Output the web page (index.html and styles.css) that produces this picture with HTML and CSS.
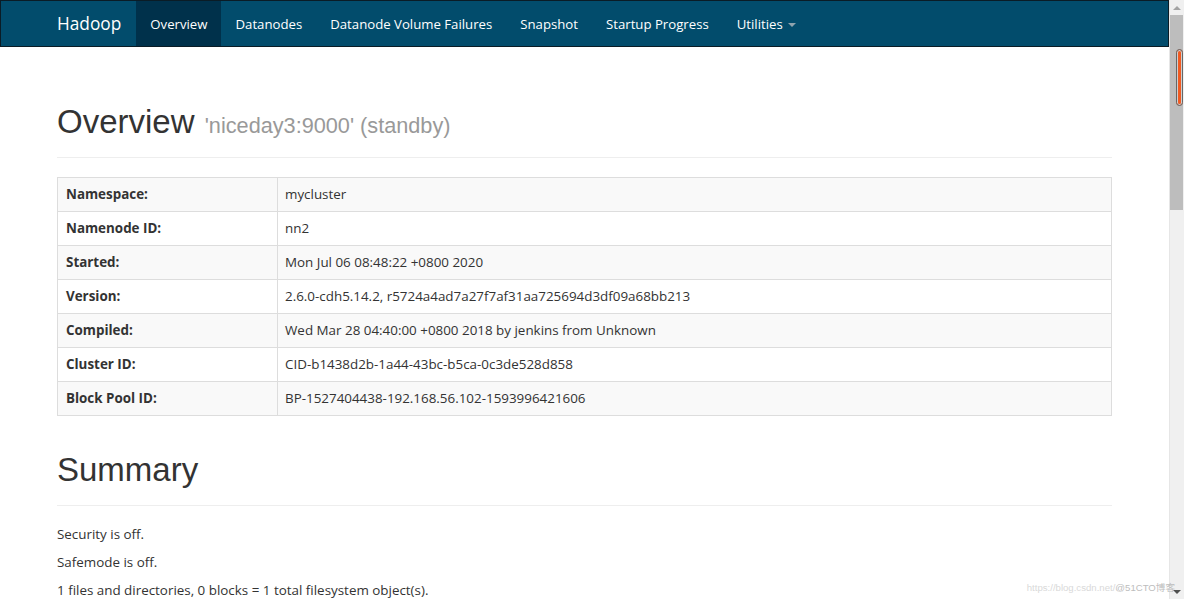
FILE: index.html
```html
<!DOCTYPE html>
<html lang="en">
<head>
<meta charset="utf-8">
<title>Namenode information</title>
<link rel="stylesheet" href="styles.css">
</head>
<body>
<div class="window">
  <div class="viewport">
    <header class="navbar">
      <div class="container nav-inner">
        <a class="brand" href="#">Hadoop</a>
        <ul class="nav">
          <li class="active"><a href="#">Overview</a></li>
          <li><a href="#">Datanodes</a></li>
          <li><a href="#">Datanode Volume Failures</a></li>
          <li><a href="#">Snapshot</a></li>
          <li><a href="#">Startup Progress</a></li>
          <li><a href="#">Utilities <span class="caret"></span></a></li>
        </ul>
      </div>
    </header>
    <main class="container">
      <div class="page-header first">
        <h1>Overview <small>'niceday3:9000' (standby)</small></h1>
      </div>
      <table class="info">
        <tbody>
          <tr><th>Namespace:</th><td>mycluster</td></tr>
          <tr><th>Namenode ID:</th><td>nn2</td></tr>
          <tr><th>Started:</th><td>Mon Jul 06 08:48:22 +0800 2020</td></tr>
          <tr><th>Version:</th><td>2.6.0-cdh5.14.2, r5724a4ad7a27f7af31aa725694d3df09a68bb213</td></tr>
          <tr><th>Compiled:</th><td>Wed Mar 28 04:40:00 +0800 2018 by jenkins from Unknown</td></tr>
          <tr><th>Cluster ID:</th><td>CID-b1438d2b-1a44-43bc-b5ca-0c3de528d858</td></tr>
          <tr><th>Block Pool ID:</th><td>BP-1527404438-192.168.56.102-1593996421606</td></tr>
        </tbody>
      </table>
      <div class="page-header second">
        <h1>Summary</h1>
      </div>
      <p>Security is off.</p>
      <p>Safemode is off.</p>
      <p>1 files and directories, 0 blocks = 1 total filesystem object(s).</p>
    </main>
  </div>
  <div class="scrollbar">
    <div class="sb-btn"><span class="arrow-up"></span></div>
    <div class="sb-thumb"><div class="sb-grip"></div></div>
    <div class="sb-track"></div>
    <div class="sb-btn"><span class="arrow-down"></span></div>
  </div>
  <div class="watermark">https://blog.csdn.net/<span class="wm-strong">@51CTO博客</span></div>
</div>
</body>
</html>
```
FILE: styles.css
```css
html, body {
  margin: 0;
  padding: 0;
  height: 100%;
  overflow: hidden;
}

body {
  font-family: "Open Sans", "Noto Sans", sans-serif;
  font-size: 13.4px;
  color: #333;
  background: #fff;
}

.window {
  display: flex;
  height: 599px;
  position: relative;
}

.viewport {
  flex: 1;
  min-width: 0;
  overflow: hidden;
}

.container {
  width: 1085px;
  padding: 0 15px;
  box-sizing: border-box;
  margin: 0 auto;
}

/* Navbar */
.navbar {
  height: 47px;
  box-sizing: border-box;
  background: #024c6c;
  border: 1px solid #0a1c26;
}

.nav-inner {
  display: flex;
  height: 45px;
}

.brand {
  margin-left: -15px;
  padding: 1px 15px 0;
  font-size: 17.3px;
  line-height: 44px;
  color: #fff;
  text-decoration: none;
}

.nav {
  display: flex;
  list-style: none;
  margin: 0;
  padding: 0;
  font-size: 13.2px;
}

.nav a {
  display: block;
  padding: 1px 14px 0;
  line-height: 44px;
  color: #fff;
  text-decoration: none;
}

.nav .active a {
  background: #00314b;
}

.caret {
  display: inline-block;
  width: 0;
  height: 0;
  margin-left: 2px;
  vertical-align: middle;
  border-top: 4px solid #8fa3ae;
  border-left: 4px solid transparent;
  border-right: 4px solid transparent;
}

/* Headings */
.page-header {
  margin: 0 0 19px;
  border-bottom: 1px solid #eee;
}

.page-header.first {
  margin-top: 57px;
  padding-bottom: 17px;
}

.page-header.second {
  margin-top: 36px;
  padding-bottom: 16px;
  margin-bottom: 18px;
}

h1 {
  margin: 0;
  font-family: "Liberation Sans", Arial, sans-serif;
  font-size: 33px;
  font-weight: normal;
  line-height: 1.1;
  color: #333;
}

h1 small {
  font-size: 21.7px;
  line-height: 1;
  color: #999;
  margin-left: 1px;
}

/* Table */
.info {
  width: 100%;
  border-collapse: collapse;
  border: 1px solid #ddd;
}

.info th,
.info td {
  border: 1px solid #ddd;
  padding: 8px 8px 8px 7px;
  line-height: 17px;
  text-align: left;
  vertical-align: top;
}

.info th {
  width: 203px;
  padding-left: 8px;
  font-weight: bold;
}

.info tr:nth-child(odd) {
  background: #f9f9f9;
}

p {
  margin: 0 0 8px;
  line-height: 20px;
}

/* Fake scrollbar */
.scrollbar {
  width: 15px;
  background: #f0f0f0;
  display: flex;
  flex-direction: column;
  box-shadow: inset 1px 0 0 #e6e6e6;
}

.sb-btn {
  height: 15px;
  display: flex;
  align-items: center;
  justify-content: center;
}

.arrow-up {
  width: 0;
  height: 0;
  border-bottom: 4px solid #a3a3a3;
  border-left: 4px solid transparent;
  border-right: 4px solid transparent;
}

.arrow-down {
  width: 0;
  height: 0;
  border-top: 4px solid #505050;
  border-left: 4px solid transparent;
  border-right: 4px solid transparent;
}

.sb-thumb {
  height: 195px;
  width: 13px;
  margin-left: 1px;
  background: #bdbdbd;
  box-sizing: border-box;
  padding: 34px 0 0 6px;
}

.sb-grip {
  width: 7px;
  height: 57px;
  box-sizing: border-box;
  border: 1px solid #666;
  border-radius: 4px;
  background: #f05a22;
  box-shadow: inset 0 0 0 1px #cfcfcf;
}

.sb-track {
  flex: 1;
}

/* Watermark overlay */
.watermark {
  position: absolute;
  right: 9px;
  bottom: 5px;
  font-family: "Liberation Sans", "Noto Sans CJK SC", sans-serif;
  font-size: 9.6px;
  color: #d9d9d9;
  white-space: nowrap;
}

.wm-strong {
  color: #bdbdbd;
}
```
